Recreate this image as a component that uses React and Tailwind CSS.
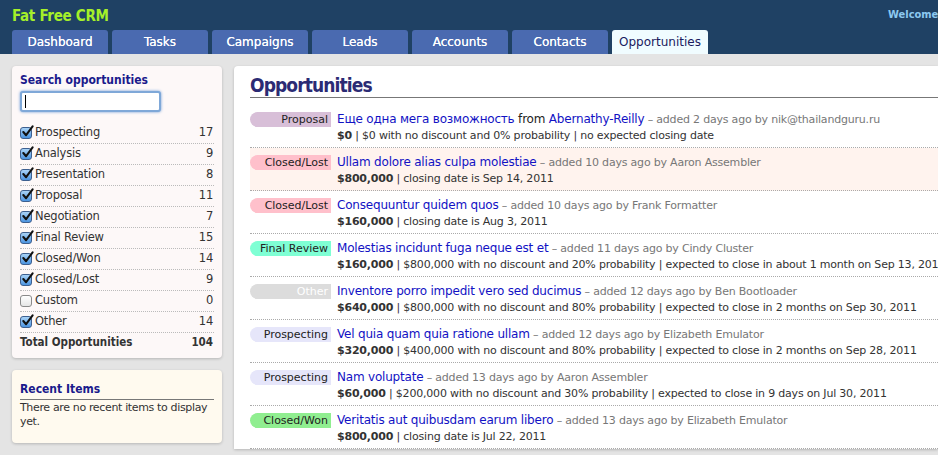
import React from "react";

const tabs = ["Dashboard", "Tasks", "Campaigns", "Leads", "Accounts", "Contacts", "Opportunities"];

const stages = [
  { name: "Prospecting", count: 17, checked: true },
  { name: "Analysis", count: 9, checked: true },
  { name: "Presentation", count: 8, checked: true },
  { name: "Proposal", count: 11, checked: true },
  { name: "Negotiation", count: 7, checked: true },
  { name: "Final Review", count: 15, checked: true },
  { name: "Closed/Won", count: 14, checked: true },
  { name: "Closed/Lost", count: 9, checked: true },
  { name: "Custom", count: 0, checked: false },
  { name: "Other", count: 14, checked: true },
];

const opportunities = [
  {
    stage: "Proposal", badge: "bg-[#d8bfd8] text-[#222]",
    title: "Еще одна мега возможность", from: "Abernathy-Reilly",
    meta: "added 2 days ago by nik@thailandguru.ru",
    amount: "$0", rest: "$0 with no discount and 0% probability | no expected closing date",
  },
  {
    stage: "Closed/Lost", badge: "bg-[#ffc0cb] text-[#222]", highlight: true,
    title: "Ullam dolore alias culpa molestiae",
    meta: "added 10 days ago by Aaron Assembler",
    amount: "$800,000", rest: "closing date is Sep 14, 2011",
  },
  {
    stage: "Closed/Lost", badge: "bg-[#ffc0cb] text-[#222]",
    title: "Consequuntur quidem quos",
    meta: "added 10 days ago by Frank Formatter",
    amount: "$160,000", rest: "closing date is Aug 3, 2011",
  },
  {
    stage: "Final Review", badge: "bg-[#7fffd4] text-[#222]",
    title: "Molestias incidunt fuga neque est et",
    meta: "added 11 days ago by Cindy Cluster",
    amount: "$160,000", rest: "$800,000 with no discount and 20% probability | expected to close in about 1 month on Sep 13, 2011",
  },
  {
    stage: "Other", badge: "bg-[#dcdcdc] text-white",
    title: "Inventore porro impedit vero sed ducimus",
    meta: "added 12 days ago by Ben Bootloader",
    amount: "$640,000", rest: "$800,000 with no discount and 80% probability | expected to close in 2 months on Sep 30, 2011",
  },
  {
    stage: "Prospecting", badge: "bg-[#e6e6fa] text-[#222]",
    title: "Vel quia quam quia ratione ullam",
    meta: "added 12 days ago by Elizabeth Emulator",
    amount: "$320,000", rest: "$400,000 with no discount and 80% probability | expected to close in 2 months on Sep 28, 2011",
  },
  {
    stage: "Prospecting", badge: "bg-[#e6e6fa] text-[#222]",
    title: "Nam voluptate",
    meta: "added 13 days ago by Aaron Assembler",
    amount: "$60,000", rest: "$200,000 with no discount and 30% probability | expected to close in 9 days on Jul 30, 2011",
  },
  {
    stage: "Closed/Won", badge: "bg-[#90ee90] text-[#222]",
    title: "Veritatis aut quibusdam earum libero",
    meta: "added 13 days ago by Elizabeth Emulator",
    amount: "$800,000", rest: "closing date is Jul 22, 2011",
  },
];

// narrower bold face, closer to the original Lucida Grande bold
const bold = "font-['DejaVu_Sans_Condensed','DejaVu_Sans',sans-serif] font-stretch-condensed font-bold";

function Checkbox({ checked }) {
  if (!checked) {
    return (
      <span className="w-[12px] h-[12px] rounded-[3px] border border-[#8a8a8a] bg-gradient-to-b from-white to-[#e6e6e6] shrink-0" />
    );
  }
  return (
    <span className="relative w-[12px] h-[12px] rounded-[3px] border border-[#3d5f8f] bg-gradient-to-b from-[#a9d3f7] to-[#4b94e0] shrink-0">
      <svg viewBox="0 0 14 14" className="absolute left-[0px] top-[-3px] w-[13px] h-[13px]">
        <path d="M2.5 7.5 L5.5 11 L12.5 1.5" fill="none" stroke="#111" strokeWidth="2.2" strokeLinecap="round" strokeLinejoin="round" />
      </svg>
    </span>
  );
}

export default function App() {
  return (
    <div className="h-[455px] overflow-hidden bg-[#e4e4e4] font-['DejaVu_Sans',sans-serif] text-[#333]">
      <div className="bg-[#1f4164] h-[54px] px-[12px] flex flex-col">
        <div className="flex items-start pt-[5px] h-[30px] whitespace-nowrap">
          <span className={"w-[876px] shrink-0 text-[15px] text-[#a5f02a] tracking-[-0.3px] " + bold}>Fat Free CRM</span>
          <span className={"text-[11px] text-[#8cc9f0] pt-[2px] " + bold}>Welcome, Admin</span>
        </div>
        <div className="flex gap-[4px] h-[24px]">
          {tabs.map((t) => (
            <div
              key={t}
              className={
                t === "Opportunities"
                  ? "w-[96px] rounded-t-[3px] bg-[#f0fcff] text-[#1a1a5e] text-[12px] flex items-center justify-center"
                  : "w-[96px] rounded-t-[3px] bg-[#4a6ab0] text-white text-[12px] [text-shadow:0_0_0.6px_#fff] flex items-center justify-center"
              }
            >
              {t}
            </div>
          ))}
        </div>
      </div>

      <div className="flex gap-[12px] pl-[12px] pt-[12px]">
        <div className="w-[210px] shrink-0 flex flex-col gap-[12px]">
          <div className="bg-[#fdf8f8] rounded-[4px] shadow-[0_1px_3px_rgba(0,0,0,0.2)] px-[8px] pt-[6px] pb-[5px]">
            <div className={"text-[12px] text-[#1a1a8c] leading-[16px] " + bold}>Search opportunities</div>
            <div className="mt-[3px] mb-[11px] w-[141px] h-[21px] rounded-[3px] border-2 border-[#7fa8d8] shadow-[0_0_3px_#6a9ad6] bg-white flex items-center pl-[3px]">
              <span className="w-[1px] h-[13px] bg-black" />
            </div>
            {stages.map((s) => (
              <div key={s.name} className="flex items-center h-[21px] border-b border-dotted border-[#bbb] text-[11.5px] tracking-[-0.2px]">
                <Checkbox checked={s.checked} />
                <span className="ml-[3px] flex-1">{s.name}</span>
                <span className="pr-[1px]">{s.count}</span>
              </div>
            ))}
            <div className={"flex items-center h-[20px] text-[11.5px] " + bold}>
              <span className="flex-1">Total Opportunities</span>
              <span className="pr-[1px]">104</span>
            </div>
          </div>

          <div className="bg-[#fffaef] rounded-[4px] shadow-[0_1px_3px_rgba(0,0,0,0.2)] px-[8px] pt-[11px] pb-[14px]">
            <div className={"text-[12px] text-[#1a1a8c] leading-[16px] border-b border-[#777] pb-[2px] " + bold}>Recent Items</div>
            <div className="text-[11px] leading-[14px] pt-[1px] tracking-[-0.35px]">There are no recent items to display yet.</div>
          </div>
        </div>

        <div className="flex-1 min-w-0 bg-white rounded-tl-[4px] shadow-[0_1px_3px_rgba(0,0,0,0.2)] pl-[16px] pt-[7px] whitespace-nowrap overflow-hidden">
          <div className={"text-[19px] text-[#2b2b74] leading-[24px] border-b border-[#777] tracking-[-0.9px] " + bold}>Opportunities</div>
          <div className="mt-[7px]">
            {opportunities.map((o, i) => (
              <div
                key={i}
                className={
                  "flex h-[43px] pt-[6px] border-b border-dotted border-[#aaa] " +
                  (o.highlight ? "bg-[#fff3ee]" : "")
                }
              >
                <div className={"w-[81px] h-[15px] mt-[1px] rounded-l-full text-right pr-[3px] text-[11px] leading-[15px] shrink-0 " + o.badge}>
                  {o.stage}
                </div>
                <div className="pl-[6px] text-[12px] leading-[16px] tracking-[-0.2px]">
                  <div>
                    <span className="text-[#1212c4]">{o.title}</span>
                    {o.from && (
                      <>
                        <span className="text-[#222]"> from </span>
                        <span className="text-[#1212c4]">{o.from}</span>
                      </>
                    )}
                    <span className="text-[#777] text-[11px]"> – {o.meta}</span>
                  </div>
                  <div className="text-[11px] text-[#333]">
                    <b>{o.amount}</b> | {o.rest}
                  </div>
                </div>
              </div>
            ))}
          </div>
        </div>
      </div>
    </div>
  );
}
